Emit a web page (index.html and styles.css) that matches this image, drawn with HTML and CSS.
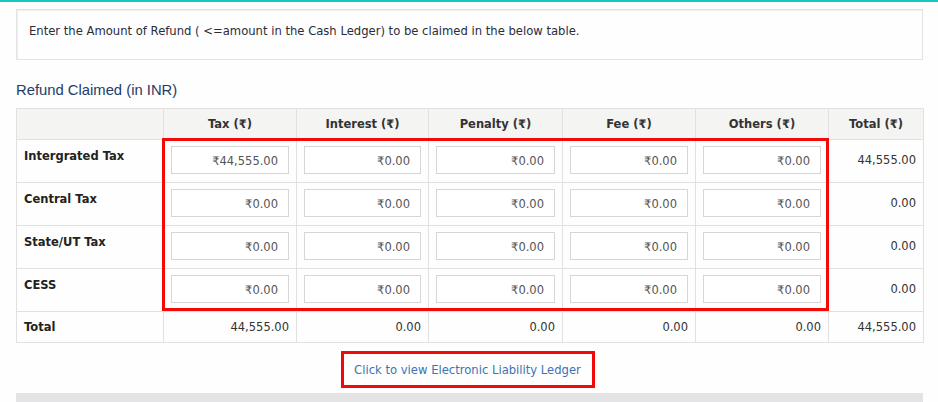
FILE: index.html
```html
<!DOCTYPE html>
<html>
<head>
<meta charset="utf-8">
<link rel="stylesheet" href="styles.css">
</head>
<body>
<div class="topline"></div>
<div class="page">
  <div class="info">Enter the Amount of Refund ( &lt;=amount in the Cash Ledger) to be claimed in the below table.</div>
  <h4 class="title">Refund Claimed (in INR)</h4>
  <div class="tablewrap">
    <table class="grid">
      <colgroup>
        <col class="c0"><col class="c1"><col class="c2"><col class="c3"><col class="c4"><col class="c5"><col class="c6">
      </colgroup>
      <thead>
        <tr><th></th><th>Tax (₹)</th><th>Interest (₹)</th><th>Penalty (₹)</th><th>Fee (₹)</th><th>Others (₹)</th><th>Total (₹)</th></tr>
      </thead>
      <tbody>
        <tr class="inrow"><td class="lbl">Intergrated Tax</td>
          <td><div class="inp">₹44,555.00</div></td><td><div class="inp">₹0.00</div></td><td><div class="inp">₹0.00</div></td><td><div class="inp">₹0.00</div></td><td><div class="inp">₹0.00</div></td><td class="num">44,555.00</td></tr>
        <tr class="inrow"><td class="lbl">Central Tax</td>
          <td><div class="inp">₹0.00</div></td><td><div class="inp">₹0.00</div></td><td><div class="inp">₹0.00</div></td><td><div class="inp">₹0.00</div></td><td><div class="inp">₹0.00</div></td><td class="num">0.00</td></tr>
        <tr class="inrow"><td class="lbl">State/UT Tax</td>
          <td><div class="inp">₹0.00</div></td><td><div class="inp">₹0.00</div></td><td><div class="inp">₹0.00</div></td><td><div class="inp">₹0.00</div></td><td><div class="inp">₹0.00</div></td><td class="num">0.00</td></tr>
        <tr class="inrow"><td class="lbl">CESS</td>
          <td><div class="inp">₹0.00</div></td><td><div class="inp">₹0.00</div></td><td><div class="inp">₹0.00</div></td><td><div class="inp">₹0.00</div></td><td><div class="inp">₹0.00</div></td><td class="num">0.00</td></tr>
        <tr class="totrow"><td class="lbl">Total</td><td class="num">44,555.00</td><td class="num">0.00</td><td class="num">0.00</td><td class="num">0.00</td><td class="num">0.00</td><td class="num">44,555.00</td></tr>
      </tbody>
    </table>
    <div class="hl"></div>
  </div>
  <div class="linkrow"><a class="ledger">Click to view Electronic Liability Ledger</a></div>
  <div class="bottombar"></div>
</div>
</body>
</html>
```
FILE: styles.css
```css
* { box-sizing: border-box; }
html, body { margin: 0; padding: 0; background: #fdfefd; }
body { font-family: "DejaVu Sans", Verdana, sans-serif; font-size: 12px; color: #333; overflow: hidden; height: 402px; }
.topline { height: 2px; background: #13c9c6; }
.page { padding: 7px 15px 0 16px; }
.info {
  height: 51px;
  border: 1px solid #e2e3e2;
  box-shadow: inset 1px 1px 0 #eeeeee;
  background: #fdfefd;
  padding: 14px 0 0 12px;
  color: #2b2b3b;
  font-size: 11.6px;
}
.title {
  margin: 0;
  padding: 22px 0 0 0;
  height: 48px;
  font-family: "Liberation Sans", Arial, sans-serif;
  font-weight: normal;
  font-size: 14.8px;
  color: #243b6b;
}
.tablewrap { position: relative; }
.grid { width: 907px; border-collapse: collapse; table-layout: fixed; }
.c0 { width: 147px; } .c1 { width: 133px; } .c2 { width: 132px; } .c3 { width: 134px; }
.c4 { width: 133px; } .c5 { width: 133px; } .c6 { width: 95px; }
.grid th, .grid td { border: 1px solid #e1e1e1; padding: 0; }
.grid th {
  height: 31px; background: #f4f4f3; font-weight: bold; color: #333; text-align: center; font-size: 11.5px;
}
.inrow td { height: 43px; vertical-align: top; padding: 6px 7px 0 7px; }
.lbl { font-weight: bold; color: #222; font-size: 11.5px; }
.inrow td.lbl { padding: 9px 0 0 7px; }
.inp {
  height: 28px; border: 1px solid #d6d6d6; background: #fff; text-align: right;
  padding: 7px 10px 0 0; color: #555; font-size: 11.5px;
}
.inrow td.num { text-align: right; padding: 13px 7px 0 0; color: #333; font-size: 11.5px; }
.totrow td { height: 31px; vertical-align: middle; font-size: 11.5px; }
.totrow td.num { text-align: right; padding-right: 7px; color: #333; }
.totrow td.lbl { padding-left: 7px; }
.hl {
  position: absolute; left: 146px; top: 30px; width: 667px; height: 173px;
  border: 3px solid #f00a0a;
}
.linkrow { display: flex; justify-content: center; padding: 8px 0 0 0; }
.ledger {
  border: 3px solid #f00a0a; width: 254px; height: 37px;
  display: flex; align-items: center; justify-content: center;
  color: #3e72b5; font-size: 11.6px; margin-left: -4px; text-decoration: none;
}
.bottombar { margin-top: 5px; height: 12px; background: #e4e4e6; }
```
